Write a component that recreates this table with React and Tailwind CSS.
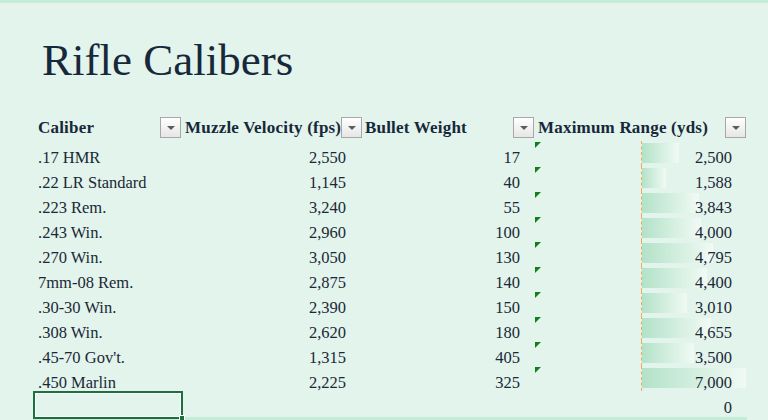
import React from "react";

const rows = [
  [".17 HMR", "2,550", "17", 2500],
  [".22 LR Standard", "1,145", "40", 1588],
  [".223 Rem.", "3,240", "55", 3843],
  [".243 Win.", "2,960", "100", 4000],
  [".270 Win.", "3,050", "130", 4795],
  ["7mm-08 Rem.", "2,875", "140", 4400],
  [".30-30 Win.", "2,390", "150", 3010],
  [".308 Win.", "2,620", "180", 4655],
  [".45-70 Gov't.", "1,315", "405", 3500],
  [".450 Marlin", "2,225", "325", 7000],
];

const fmt = (n) => n.toLocaleString("en-US");

// Filter-knop in de kopregel
const FilterButton = ({ className = "" }) => (
  <div
    className={`self-start mt-[1px] w-[21px] h-[21px] shrink-0 border border-[#a8a8a8] bg-linear-to-b from-white to-[#e6e6e6] flex items-center justify-center ${className}`}
  >
    <div className="w-0 h-0 border-l-[4px] border-r-[4px] border-t-[4px] border-l-transparent border-r-transparent border-t-[#5c5c5c]" />
  </div>
);

export default function App() {
  return (
    <div
      className="w-[768px] h-[420px] overflow-hidden bg-[#e2f4ec] text-[#1b2836]"
      style={{ fontFamily: '"Liberation Serif", "Times New Roman", serif' }}
    >
      <div className="h-[3px] bg-[#c5ebd9]" />

      {/* Titel */}
      <div className="mt-[35px] pl-[42px] text-[45px] leading-[45px] text-[#17283a]">
        Rifle Calibers
      </div>

      {/* Tabel */}
      <div className="mt-[33px] grid grid-cols-[33px_150px_178px_174px_212px_1fr] text-[16.5px]">
        {/* Kopregel */}
        <div className="h-[25px]" />
        <div className="h-[25px] flex items-end font-bold text-[17px] tracking-[0.2px] text-[#17283a]">
          <span className="pl-[5px] pb-[5px] leading-[16px] whitespace-nowrap">Caliber</span>
          <FilterButton className="ml-auto mr-[2px]" />
        </div>
        <div className="h-[25px] flex items-end font-bold text-[17px] tracking-[0.2px] text-[#17283a]">
          <span className="pl-[2px] pb-[5px] leading-[16px] whitespace-nowrap">Muzzle Velocity (fps)</span>
          <FilterButton className="ml-auto mr-[1px]" />
        </div>
        <div className="h-[25px] flex items-end font-bold text-[17px] tracking-[0.2px] text-[#17283a]">
          <span className="pl-[4px] pb-[5px] leading-[16px] whitespace-nowrap">Bullet Weight</span>
          <FilterButton className="ml-auto mr-[1px]" />
        </div>
        <div className="h-[25px] flex items-end font-bold text-[17px] tracking-[0.2px] text-[#17283a]">
          <span className="pl-[3px] pb-[5px] leading-[16px] whitespace-nowrap">Maximum Range (yds)</span>
          <FilterButton className="ml-auto mr-[1px]" />
        </div>
        <div className="h-[25px]" />

        {/* Gegevens */}
        {rows.map(([name, velocity, weight, range]) => (
          <React.Fragment key={name}>
            <div className="h-[25px]" />
            <div className="h-[25px] flex items-end pl-[5px] leading-[16px] whitespace-nowrap">{name}</div>
            <div className="h-[25px] flex items-end justify-end pr-[15px] leading-[16px]">{velocity}</div>
            <div className="h-[25px] flex items-end justify-end pr-[15px] leading-[16px]">{weight}</div>
            <div className="relative h-[25px] flex items-end justify-end pr-[15px] leading-[16px]">
              <div className="absolute left-[0px] top-[1px] w-0 h-0 border-t-[6px] border-r-[6px] border-t-[#12801a] border-r-transparent" />
              <div className="absolute left-[106px] top-0 bottom-0 right-0 border-l border-dashed border-[#f2a950]">
                <div
                  className="mt-[2px] h-[20px] bg-linear-to-r from-[#b3e2c8] to-[#f1faf5]"
                  style={{ width: `${(range / 7000) * 104}px` }}
                />
              </div>
              <span className="relative">{fmt(range)}</span>
            </div>
            <div className="h-[25px]" />
          </React.Fragment>
        ))}

        {/* Totaalregel */}
        <div className="h-[26px]" />
        <div className="relative h-[26px]">
          <div className="absolute left-0 top-0 w-[150px] h-[28px] border-2 border-[#1f6e3f] z-10">
            <div className="absolute inset-0 border border-white/80" />
            <div className="absolute right-[-4px] bottom-[-4px] w-[6px] h-[6px] bg-[#1f6e3f] border border-white" />
          </div>
        </div>
        <div className="h-[26px]" />
        <div className="h-[26px]" />
        <div className="h-[26px] flex items-end justify-end pr-[15px] pb-[1px] leading-[16px]">0</div>
        <div className="h-[26px]" />

        <div />
        <div className="col-span-4 h-[3px] bg-[#c5ebd9]" />
        <div />
      </div>
    </div>
  );
}
